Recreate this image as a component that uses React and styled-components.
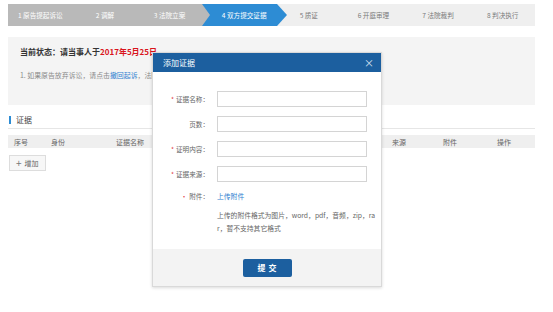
import React from "react";
import styled, { createGlobalStyle } from "styled-components";

const GlobalStyle = createGlobalStyle`
  body {
    margin: 0;
    background: #fff;
    font-family: "Noto Sans CJK SC", "Liberation Sans", sans-serif;
  }
`;

const steps = [
  "1 原告提起诉讼",
  "2 调解",
  "3 法院立案",
  "4 双方提交证据",
  "5 质证",
  "6 开庭审理",
  "7 法院裁判",
  "8 判决执行",
];
const CURRENT = 3;

const columns = ["序号", "身份", "证据名称", "来源", "附件", "操作"];

const Page = styled.div`
  position: relative;
  width: 553px;
  height: 312px;
  padding: 4px 18px 0 8px;
  box-sizing: border-box;
  overflow: hidden;
`;

const StepBar = styled.div`
  display: flex;
  height: 22px;
  background: #efefef;
`;

const Step = styled.div`
  position: relative;
  flex: 1;
  display: flex;
  align-items: center;
  justify-content: center;
  font-size: 6.6px;
  background: ${(p) => (p.$state === "done" ? "#b9b9b9" : p.$state === "current" ? "#2d8cd4" : "#efefef")};
  color: ${(p) => (p.$state === "todo" ? "#7a7a7a" : "#fff")};
  padding-left: ${(p) => (p.$state === "current" ? "10px" : "0")};

  ${(p) =>
    p.$state === "current" &&
    `
    &::before {
      content: "";
      position: absolute;
      left: 0;
      top: 0;
      border-top: 11px solid transparent;
      border-bottom: 11px solid transparent;
      border-left: 8px solid #b9b9b9;
    }
    &::after {
      content: "";
      position: absolute;
      right: -10px;
      top: 0;
      z-index: 1;
      border-top: 11px solid transparent;
      border-bottom: 11px solid transparent;
      border-left: 10px solid #2d8cd4;
    }
  `}
`;

const StatusPanel = styled.div`
  margin-top: 11px;
  height: 68px;
  background: #f4f4f4;
  padding: 9px 12px 0;
  box-sizing: border-box;
`;

const StatusTitle = styled.div`
  font-size: 8px;
  font-weight: bold;
  color: #333;
  line-height: 12px;
`;

const Red = styled.span`
  color: #d9141c;
`;

const StatusNote = styled.div`
  margin-top: 11px;
  font-size: 6.9px;
  color: #8a8a8a;
  line-height: 12px;
  white-space: nowrap;
`;

const Link = styled.span`
  color: #2f7fd0;
`;

const SectionTitle = styled.div`
  display: flex;
  align-items: center;
  gap: 5px;
  margin-top: 9px;
  padding: 0 0 2px 1px;
  line-height: 12px;
  font-size: 8px;
  color: #444;
  border-bottom: 1px solid #e6e6e6;
`;

const Bar = styled.span`
  width: 2px;
  height: 8px;
  background: #2d8cd4;
`;

const TableHead = styled.div`
  display: grid;
  grid-template-columns: 37px 65px 276px 51px 54px 1fr;
  align-items: center;
  height: 13px;
  margin-top: 6px;
  padding-left: 6px;
  background: #efefef;
  font-size: 7px;
  color: #666;
`;

const AddButton = styled.div`
  display: inline-flex;
  align-items: center;
  gap: 3px;
  margin: 6px 0 0 1px;
  height: 16px;
  padding: 0 6px;
  box-sizing: border-box;
  border: 1px solid #ddd;
  background: #f7f7f7;
  font-size: 7px;
  color: #666;
`;

const Plus = styled.span`
  font-size: 10px;
  color: #777;
`;

const Modal = styled.div`
  position: absolute;
  left: 152px;
  top: 52px;
  width: 230px;
  height: 235px;
  background: #fff;
  border: 1px solid #d9d9d9;
  box-shadow: 0 1px 3px rgba(0, 0, 0, 0.15);
  display: flex;
  flex-direction: column;
  box-sizing: border-box;
`;

const ModalHeader = styled.div`
  display: flex;
  align-items: center;
  justify-content: space-between;
  height: 19px;
  padding: 0 7px 0 10px;
  background: #1c5f9f;
  color: #fff;
  font-size: 8px;
`;

const Close = styled.span`
  font-size: 10px;
  color: #d6e3f0;
`;

const ModalBody = styled.div`
  flex: 1;
  display: flex;
  flex-direction: column;
  gap: 9px;
  padding-top: 19px;
`;

const Row = styled.div`
  display: grid;
  grid-template-columns: 56px 150px;
  column-gap: 8px;
  align-items: center;
`;

const Label = styled.div`
  text-align: right;
  font-size: 6.6px;
  color: #666;
`;

const Star = styled.span`
  color: #e0393e;
  margin-right: 2px;
`;

const Input = styled.div`
  height: 16px;
  border: 1px solid #d4d4d4;
  box-sizing: border-box;
`;

const Upload = styled.span`
  font-size: 6.8px;
  line-height: 10px;
  color: #2f7fd0;
`;

const Hint = styled.div`
  grid-column: 2;
  margin-top: 8px;
  font-size: 6.8px;
  line-height: 13px;
  color: #666;
  white-space: nowrap;
`;

const ModalFooter = styled.div`
  margin-top: auto;
  height: 37px;
  background: #f3f3f3;
  display: flex;
  justify-content: center;
  align-items: center;
`;

const Submit = styled.div`
  width: 49px;
  height: 18px;
  border-radius: 2px;
  background: #1c5f9f;
  color: #fff;
  font-size: 8px;
  font-weight: bold;
  display: flex;
  align-items: center;
  justify-content: center;
  letter-spacing: 3px;
  text-indent: 3px;
`;

const fields = [
  { label: "证据名称：", required: true },
  { label: "页数：", required: false },
  { label: "证明内容：", required: true },
  { label: "证据来源：", required: true },
];

export default function App() {
  return (
    <>
      <GlobalStyle />
      <Page>
        <StepBar>
          {steps.map((s, i) => (
            <Step key={s} $state={i < CURRENT ? "done" : i === CURRENT ? "current" : "todo"}>
              {s}
            </Step>
          ))}
        </StepBar>

        <StatusPanel>
          <StatusTitle>
            当前状态：请当事人于<Red>2017年5月25日</Red>
          </StatusTitle>
          <StatusNote>
            1. 如果原告放弃诉讼，请点击<Link>撤回起诉</Link>，法院
          </StatusNote>
        </StatusPanel>

        <SectionTitle>
          <Bar />
          证据
        </SectionTitle>
        <TableHead>
          {columns.map((c) => (
            <span key={c}>{c}</span>
          ))}
        </TableHead>
        <AddButton>
          <Plus>+</Plus>增加
        </AddButton>

        <Modal>
          <ModalHeader>
            添加证据
            <Close>×</Close>
          </ModalHeader>
          <ModalBody>
            {fields.map((f) => (
              <Row key={f.label}>
                <Label>
                  {f.required && <Star>*</Star>}
                  {f.label}
                </Label>
                <Input />
              </Row>
            ))}
            <Row>
              <Label>
                <Star>•</Star>附件：
              </Label>
              <Upload>上传附件</Upload>
              <Hint>
                上传的附件格式为图片，word，pdf，音频，zip，ra
                <br />
                r，暂不支持其它格式
              </Hint>
            </Row>
          </ModalBody>
          <ModalFooter>
            <Submit>提交</Submit>
          </ModalFooter>
        </Modal>
      </Page>
    </>
  );
}
